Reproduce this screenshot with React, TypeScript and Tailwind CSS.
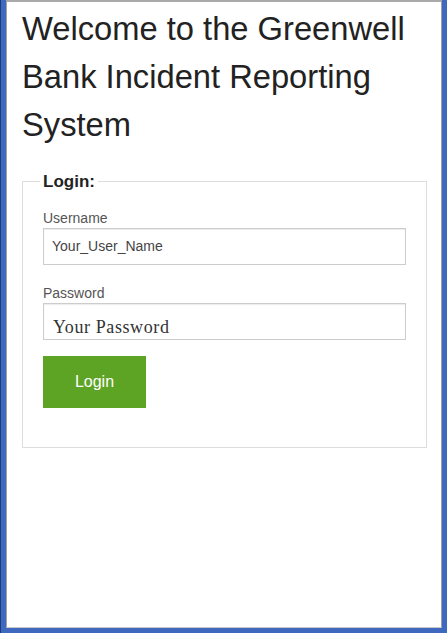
import React from "react";

export default function App() {
  const sans = { fontFamily: '"Liberation Sans", Arial, sans-serif' } as React.CSSProperties;
  return (
    <div
      className="w-[447px] h-[633px] flex bg-[#3f68bf] border-l border-[#1c3b7a] pl-[5px] pr-[5px] pb-[5px]"
      style={sans}
    >
      <div className="flex-1 flex flex-col bg-white border-t-2 border-l border-r border-b border-t-[#a9a9a9] border-l-[#a0a0a0] border-r-[#a0a0a0] border-b-[#c8c8c8] pt-[3px] pl-[15px] pr-[14px]">
        <h1 className="text-[32.7px] leading-[48px] font-normal text-[#222]">
          Welcome to the Greenwell Bank Incident Reporting System
        </h1>
        <fieldset className="mt-[20px] border border-[#ddd] px-[20px] pt-[13px] pb-[39px]">
          <legend className="text-[17px] font-bold text-[#222] px-[3px] -ml-[3px] leading-normal">
            Login:
          </legend>
          <div className="flex flex-col">
            <label className="text-[14px] leading-[20px] text-[#555]">Username</label>
            <input
              readOnly
              value="Your_User_Name"
              className="h-[37px] w-full border border-[#ccc] shadow-[inset_0_1px_1px_rgba(0,0,0,0.08)] px-[8px] text-[14px] text-[#444] outline-none"
              style={sans}
            />
            <label className="mt-[18px] text-[14px] leading-[20px] text-[#555]">Password</label>
            <input
              readOnly
              value="Your Password"
              className="h-[37px] w-full border border-[#ccc] shadow-[inset_0_1px_1px_rgba(0,0,0,0.08)] px-[9px] pt-[13px] pb-0 text-[18px] tracking-[0.6px] text-[#333] outline-none"
              style={{ fontFamily: '"Liberation Serif", "Times New Roman", serif' }}
            />
            <button
              type="button"
              className="mt-[16px] w-[103px] h-[52px] bg-[#5ea424] text-white text-[16px]"
              style={sans}
            >
              Login
            </button>
          </div>
        </fieldset>
      </div>
    </div>
  );
}
